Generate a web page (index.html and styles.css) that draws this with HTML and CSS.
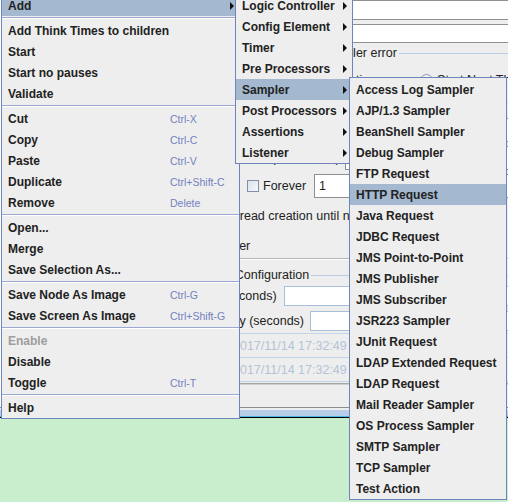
FILE: index.html
```html
<!DOCTYPE html>
<html>
<head>
<meta charset="utf-8">
<link rel="stylesheet" href="styles.css">
</head>
<body>
<div class="window">
  <div class="workspace">
    <div class="tree"></div>
    <div class="panel">
      <div class="row row-name"><span class="lbl lbl-name">Name:</span><div class="field"></div></div>
      <div class="row row-comments"><span class="lbl lbl-name">Comments:</span><div class="field"></div></div>
      <div class="row gtitle title-error"><span class="glead"></span><span class="gtext">Action to be taken after a Sampler error</span><span class="gline"></span></div>
      <div class="row row-radios">
        <span class="radio r1"></span><span class="rtext">Continue</span>
        <span class="radio r2"></span><span class="rtext">Start Next Thread Loop</span>
        <span class="radio r3"></span><span class="rtext">Stop Thread</span>
      </div>
      <div class="row gtitle title-thread"><span class="glead"></span><span class="gtext">Thread Properties</span><span class="gline"></span></div>
      <div class="row row-threads"><span class="lbl">Number of Threads (users):</span><div class="field"></div></div>
      <div class="row row-ramp"><span class="lbl">Ramp-Up Period (in seconds):</span><div class="field"></div></div>
      <div class="row row-loop"><span class="lbl lbl-loop">Loop Count:</span><span class="check"></span><span class="ctext">Forever</span><div class="field field-loop">1</div></div>
      <div class="row row-delay"><span class="check"></span><span class="ctext">Delay Thread creation until needed</span></div>
      <div class="row row-sched"><span class="check"></span><span class="ctext">Scheduler</span></div>
      <div class="group-end"></div>
      <div class="row gtitle title-config"><span class="glead short"></span><span class="gtext">Scheduler Configuration</span><span class="gline"></span></div>
      <div class="row row-duration"><span class="lbl">Duration (seconds)</span><div class="field field-light"></div></div>
      <div class="row row-startup"><span class="lbl">Startup delay (seconds)</span><div class="field field-light"></div></div>
      <div class="row row-date row-start"><span class="lbl lbl-date">Start Time</span><div class="field field-date">2017/11/14 17:32:49</div></div>
      <div class="row row-date row-end"><span class="lbl lbl-date">End Time</span><div class="field field-date">2017/11/14 17:32:49</div></div>
      <div class="group-end end2"></div>
    </div>
  </div>
  <div class="divider"></div>
  <div class="log"></div>

  <div class="menu main-menu">
    <div class="item sub active"><span>Add</span><i class="arrow"></i></div>
    <div class="sep"></div>
    <div class="item"><span>Add Think Times to children</span></div>
    <div class="item"><span>Start</span></div>
    <div class="item"><span>Start no pauses</span></div>
    <div class="item"><span>Validate</span></div>
    <div class="sep"></div>
    <div class="item"><span>Cut</span><span class="key">Ctrl-X</span></div>
    <div class="item"><span>Copy</span><span class="key">Ctrl-C</span></div>
    <div class="item"><span>Paste</span><span class="key">Ctrl-V</span></div>
    <div class="item"><span>Duplicate</span><span class="key">Ctrl+Shift-C</span></div>
    <div class="item"><span>Remove</span><span class="key">Delete</span></div>
    <div class="sep"></div>
    <div class="item"><span>Open...</span></div>
    <div class="item"><span>Merge</span></div>
    <div class="item"><span>Save Selection As...</span></div>
    <div class="sep"></div>
    <div class="item"><span>Save Node As Image</span><span class="key">Ctrl-G</span></div>
    <div class="item"><span>Save Screen As Image</span><span class="key">Ctrl+Shift-G</span></div>
    <div class="sep"></div>
    <div class="item disabled"><span>Enable</span></div>
    <div class="item"><span>Disable</span></div>
    <div class="item"><span>Toggle</span><span class="key">Ctrl-T</span></div>
    <div class="sep"></div>
    <div class="item"><span>Help</span></div>
  </div>

  <div class="menu sub1">
    <div class="item sub"><span>Logic Controller</span><i class="arrow"></i></div>
    <div class="item sub"><span>Config Element</span><i class="arrow"></i></div>
    <div class="item sub"><span>Timer</span><i class="arrow"></i></div>
    <div class="item sub"><span>Pre Processors</span><i class="arrow"></i></div>
    <div class="item sub active"><span>Sampler</span><i class="arrow"></i></div>
    <div class="item sub"><span>Post Processors</span><i class="arrow"></i></div>
    <div class="item sub"><span>Assertions</span><i class="arrow"></i></div>
    <div class="item sub"><span>Listener</span><i class="arrow"></i></div>
  </div>

  <div class="menu sub2">
    <div class="item"><span>Access Log Sampler</span></div>
    <div class="item"><span>AJP/1.3 Sampler</span></div>
    <div class="item"><span>BeanShell Sampler</span></div>
    <div class="item"><span>Debug Sampler</span></div>
    <div class="item"><span>FTP Request</span></div>
    <div class="item active"><span>HTTP Request</span></div>
    <div class="item"><span>Java Request</span></div>
    <div class="item"><span>JDBC Request</span></div>
    <div class="item"><span>JMS Point-to-Point</span></div>
    <div class="item"><span>JMS Publisher</span></div>
    <div class="item"><span>JMS Subscriber</span></div>
    <div class="item"><span>JSR223 Sampler</span></div>
    <div class="item"><span>JUnit Request</span></div>
    <div class="item"><span>LDAP Extended Request</span></div>
    <div class="item"><span>LDAP Request</span></div>
    <div class="item"><span>Mail Reader Sampler</span></div>
    <div class="item"><span>OS Process Sampler</span></div>
    <div class="item"><span>SMTP Sampler</span></div>
    <div class="item"><span>TCP Sampler</span></div>
    <div class="item"><span>Test Action</span></div>
  </div>
</div>
</body>
</html>
```

FILE: styles.css
```css
* { box-sizing: border-box; }
html, body { margin: 0; padding: 0; }
body { background: #eeeeee; }

.window {
  position: relative;
  width: 508px;
  height: 502px;
  overflow: hidden;
  background: #eeeeee;
  display: flex;
  flex-direction: column;
  font-family: "Liberation Sans", Arial, sans-serif;
}

.workspace { height: 407px; flex: none; display: flex; }
.tree { width: 170px; flex: none; background: #ffffff; }
.panel {
  flex: 1;
  min-width: 0;
  display: flex;
  flex-direction: column;
  font-size: 12.5px;
  color: #222222;
}

.row { display: flex; align-items: center; flex: none; white-space: nowrap; }
.lbl { flex: none; }

.field {
  flex: 1;
  align-self: stretch;
  background: #ffffff;
  border: 1px solid #8e8f90;
  margin-right: -4px;
  display: flex;
  align-items: center;
  padding-left: 4px;
}

.row-name { height: 20px; padding-left: 5px; }
.lbl-name { width: 47px; }
.row-comments { height: 19px; margin-top: 4px; padding-left: 5px; }

.gtitle { height: 16px; }
.glead { width: 4px; height: 0; border-top: 1px solid #b8cde3; margin-left: 2px; margin-right: 2px; flex: none; }
.glead.short { width: 1px; }
.gline { flex: 1; height: 0; border-top: 1px solid #b8cde3; margin-left: 2px; }
.title-error { margin-top: 2px; }

.row-radios { height: 20px; margin-top: 9px; }
.radio {
  width: 13px; height: 13px; flex: none;
  border-radius: 50%;
  border: 1px solid #8a9ab0;
  background: radial-gradient(circle at 50% 40%, #ffffff 0, #dfe5ec 100%);
}
.r1 { margin-left: 146px; }
.r2 { margin-left: 37px; }
.r3 { margin-left: 12px; }
.rtext { margin-left: 4px; }

.title-thread { margin-top: 4px; }
.row-threads { height: 24px; margin-top: 8px; padding-left: 5px; }
.row-threads .field, .row-ramp .field { margin-left: 2px; }
.row-ramp { height: 24px; margin-top: 4px; padding-left: 5px; }
.row-loop { height: 24px; margin-top: 4px; padding-left: 0; }
.lbl-loop { width: 77px; }

.check {
  width: 12px; height: 12px; flex: none;
  border: 1px solid #7f91a8;
  background: linear-gradient(135deg, #d9e1ea 0%, #f7f9fb 100%);
}
.ctext { margin-left: 4px; }
.row-loop .ctext { margin-left: 4px; }
.field-loop { margin-left: 8px; }

.row-delay { height: 21px; margin-top: 7px; padding-left: 4px; }
.row-sched { height: 21px; margin-top: 9px; padding-left: 8px; }

.group-end { height: 2px; flex: none; margin-top: 2px; border-top: 1px solid #b6b6b6; border-bottom: 1px solid #ffffff; }
.title-config { margin-top: 7px; }

.field-light { border-color: #a9bfd8; }
.row-duration { height: 20px; margin-top: 3px; padding-left: 1px; }
.row-duration .field { margin-left: 7px; }
.row-startup { height: 20px; margin-top: 5px; padding-left: 2px; }
.row-startup .field { margin-left: 6px; }

.row-date { height: 25px; padding-left: 2px; }
.row-start { margin-top: 2px; }
.row-end { margin-top: -1px; }
.lbl-date { width: 55px; color: #222222; }
.field-date {
  background: #eeeeee;
  border-color: #c3d3e6;
  color: #b3c3d8;
  padding-left: 5px;
}
.end2 { margin-top: 1px; border-top: 1px solid #a5a5a5; border-bottom: 1px solid #cfcfcf; }

.divider {
  height: 11px;
  flex: none;
  border-top: 1px solid #8d8d8d;
  background: linear-gradient(to bottom,
    #eeeeee 0, #eeeeee 2px,
    #b9cfe9 2px, #b9cfe9 8px,
    #4ab7e6 8px, #4ab7e6 9px,
    #000000 9px, #000000 10px);
}
.log { flex: 1; background: #c8eecd; }

/* popup menus */
.menu {
  position: absolute;
  background: #eeeeee;
  border: 1px solid #7084bc;
  padding-top: 1px;
  font: bold 12px "Liberation Sans", Arial, sans-serif;
  color: #222222;
}
.main-menu { left: 1px; top: -7px; width: 239px; z-index: 1; }
.sub1 { left: 235px; top: -7px; width: 118px; z-index: 2; }
.sub2 { left: 349px; top: 77px; width: 158px; z-index: 3; }

.item {
  height: 21px;
  display: grid;
  grid-template-columns: 1fr auto;
  align-items: center;
  padding-left: 6px;
  padding-right: 5px;
  white-space: nowrap;
}
.main-menu .item { grid-template-columns: 162px 1fr; }
.main-menu .item.sub { grid-template-columns: 1fr auto; }
.item.active { background: #a4b8cf; }
.item.disabled { color: #9d9d9d; }

.key {
  font-weight: normal;
  font-size: 10.5px;
  color: #7282c0;
}

.arrow {
  display: block;
  width: 0;
  height: 0;
  border-left: 4px solid #111111;
  border-top: 4px solid transparent;
  border-bottom: 4px solid transparent;
}

.sep {
  height: 0;
  margin: 1px 0;
  border-top: 1px solid #9aa9d2;
  border-bottom: 1px solid #ffffff;
}
```
